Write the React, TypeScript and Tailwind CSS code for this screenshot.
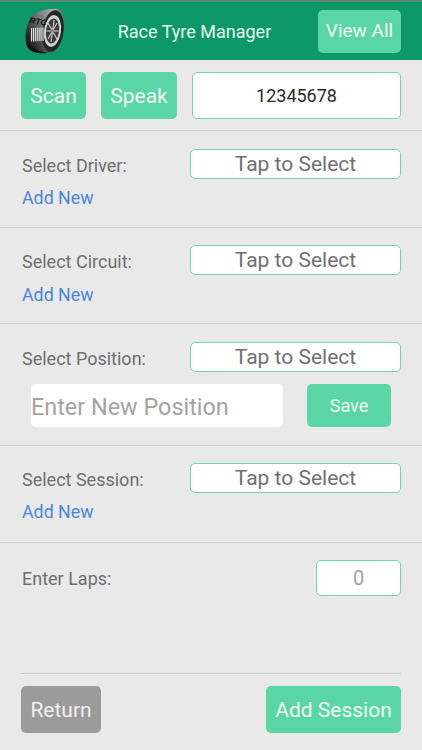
function Tyre() {
  const treads = [0, 1, 2, 3, 4, 5, 6];
  return (
    <svg width="39" height="46" viewBox="25 8 39 46" className="block shrink-0">
      <defs>
        <linearGradient id="t" x1="0" y1="0.6" x2="1" y2="0">
          <stop offset="0" stopColor="#1e1e1e" />
          <stop offset="0.45" stopColor="#77787a" />
          <stop offset="0.8" stopColor="#b0b1b3" />
          <stop offset="1" stopColor="#55565a" />
        </linearGradient>
      </defs>
      <path d="M32 16 C38 11 48 8 58 9 C63 11 64 20 63 30 C62 42 56 52 47 53 C39 54 30 52 27 46 C24 38 26 24 32 16Z" fill="url(#t)" />
      <path d="M26 40 C28 47 36 50 47 53 C38 54 29 52 27 46Z" fill="#111111" />
      <ellipse cx="53" cy="31" rx="10.5" ry="21" transform="rotate(8 53 31)" fill="#232323" />
      <ellipse cx="52.5" cy="31" rx="8.5" ry="16" transform="rotate(8 52.5 31)" fill="#cfd0d1" />
      <ellipse cx="52.5" cy="31" rx="6.5" ry="12.5" transform="rotate(8 52.5 31)" fill="#3a3a3a" />
      <g stroke="#c9c9c9" strokeWidth="1.2">
        <path d="M54 20 L51 42" />
        <path d="M46.5 31 L58.5 31" />
        <path d="M48 23 L57 39" />
        <path d="M57 23 L48 39" />
      </g>
      <circle cx="52.5" cy="31" r="1.8" fill="#8a8a8a" />
      {treads.map((i) => (
        <rect key={i} x={31 + i * 1.9} y={28 - i * 0.1} width="1.1" height={13.5} fill="#e2e2e2" />
      ))}
      <text x="29" y="23" fontSize="8.5" fontStyle="italic" fontWeight="700" fill="#111" fontFamily="'Liberation Sans', sans-serif" transform="rotate(9 29 23)">RTC</text>
    </svg>
  );
}

function TapToSelect() {
  return (
    <div className="w-[211px] h-[30px] bg-white border border-[#6fd6ae] rounded-[5px] flex items-center justify-center pt-[1px] text-[21px] text-[#707070]">
      Tap to Select
    </div>
  );
}

function Section({ label, addNew, wide }: { label: string; addNew?: boolean; wide?: boolean }) {
  return (
    <div className="flex flex-col">
      <div className="flex items-center justify-between h-[30px]">
        <span className="pl-[1px] text-[18px] text-[#6f6f6f] translate-y-[1px]">{label}</span>
        <TapToSelect />
      </div>
      {addNew && (
        <div className={wide ? "mt-[8px] pl-[1px] h-[25px] flex items-center text-[17.8px] text-[#4a86d8]" : "mt-[7px] pl-[1px] h-[25px] flex items-center text-[17.8px] text-[#4a86d8]"}>
          Add New
        </div>
      )}
    </div>
  );
}

function Divider() {
  return <div className="h-[1px] bg-[#cfcfcf] w-full shrink-0" />;
}

export default function App() {
  return (
    <div
      className="w-[422px] h-[750px] bg-[#e9e9e9] flex flex-col overflow-hidden"
      style={{ fontFamily: "Roboto, sans-serif" }}
    >
      <div className="h-[60px] bg-[#0c9868] border-t-2 border-[#5f8a78] flex items-center pl-[25px] pr-[21px] shrink-0">
        <Tyre />
        <div className="flex-1 text-center text-[18px] text-[#e8f7f0] pl-[7px]">Race Tyre Manager</div>
        <div className="w-[83px] h-[43px] bg-[#5ad5a5] rounded-[5px] flex items-center justify-center pt-[1px] text-[19px] text-[#f0fbf6]">
          View All
        </div>
      </div>

      <div className="h-[70px] px-[21px] flex items-center gap-[15px] shrink-0">
        <div className="w-[65px] h-[47px] bg-[#5ad5a5] rounded-[5px] flex items-center justify-center pt-[4px] text-[21px] text-[#f0fbf6]">
          Scan
        </div>
        <div className="w-[76px] h-[47px] bg-[#5ad5a5] rounded-[5px] flex items-center justify-center pt-[4px] text-[21px] text-[#f0fbf6]">
          Speak
        </div>
        <div className="w-[209px] h-[47px] bg-white border border-[#6fd6ae] rounded-[5px] flex items-center justify-center text-[18px] text-[#2a2a2a]">
          12345678
        </div>
      </div>
      <Divider />

      <div className="h-[96px] px-[21px] pt-[18px] shrink-0">
        <Section label="Select Driver:" addNew />
      </div>
      <Divider />
      <div className="h-[95px] px-[21px] pt-[17px] shrink-0">
        <Section label="Select Circuit:" addNew wide />
      </div>
      <Divider />
      <div className="h-[121px] px-[21px] pt-[18px] shrink-0">
        <Section label="Select Position:" />
        <div className="mt-[12px] px-[10px] flex items-center justify-between">
          <div className="w-[252px] h-[43px] bg-white rounded-[5px] flex items-center pt-[4px] text-[23.4px] text-[#a3a3a3]">
            Enter New Position
          </div>
          <div className="w-[84px] h-[43px] bg-[#5ad5a5] rounded-[5px] flex items-center justify-center text-[18px] text-[#f0fbf6]">
            Save
          </div>
        </div>
      </div>
      <Divider />
      <div className="h-[96px] px-[21px] pt-[17px] shrink-0">
        <Section label="Select Session:" addNew />
      </div>
      <Divider />

      <div className="h-[130px] px-[21px] pt-[17px] shrink-0">
        <div className="flex items-center justify-between h-[36px]">
          <span className="pl-[1px] text-[18px] text-[#6f6f6f]">Enter Laps:</span>
          <div className="w-[85px] h-[36px] bg-white border border-[#6fd6ae] rounded-[5px] flex items-center justify-center text-[20px] text-[#a3a3a3]">
            0
          </div>
        </div>
      </div>

      <div className="mx-[21px] h-[1px] bg-[#cfcbcb] shrink-0" />
      <div className="mt-[12px] px-[21px] flex items-center justify-between shrink-0">
        <div className="w-[80px] h-[47px] bg-[#9b9b9b] rounded-[5px] flex items-center justify-center pt-[2px] text-[21px] text-[#f0f0f0]">
          Return
        </div>
        <div className="w-[135px] h-[47px] bg-[#5ad5a5] rounded-[5px] flex items-center justify-center pt-[2px] text-[21px] text-[#f0fbf6]">
          Add Session
        </div>
      </div>
    </div>
  );
}
